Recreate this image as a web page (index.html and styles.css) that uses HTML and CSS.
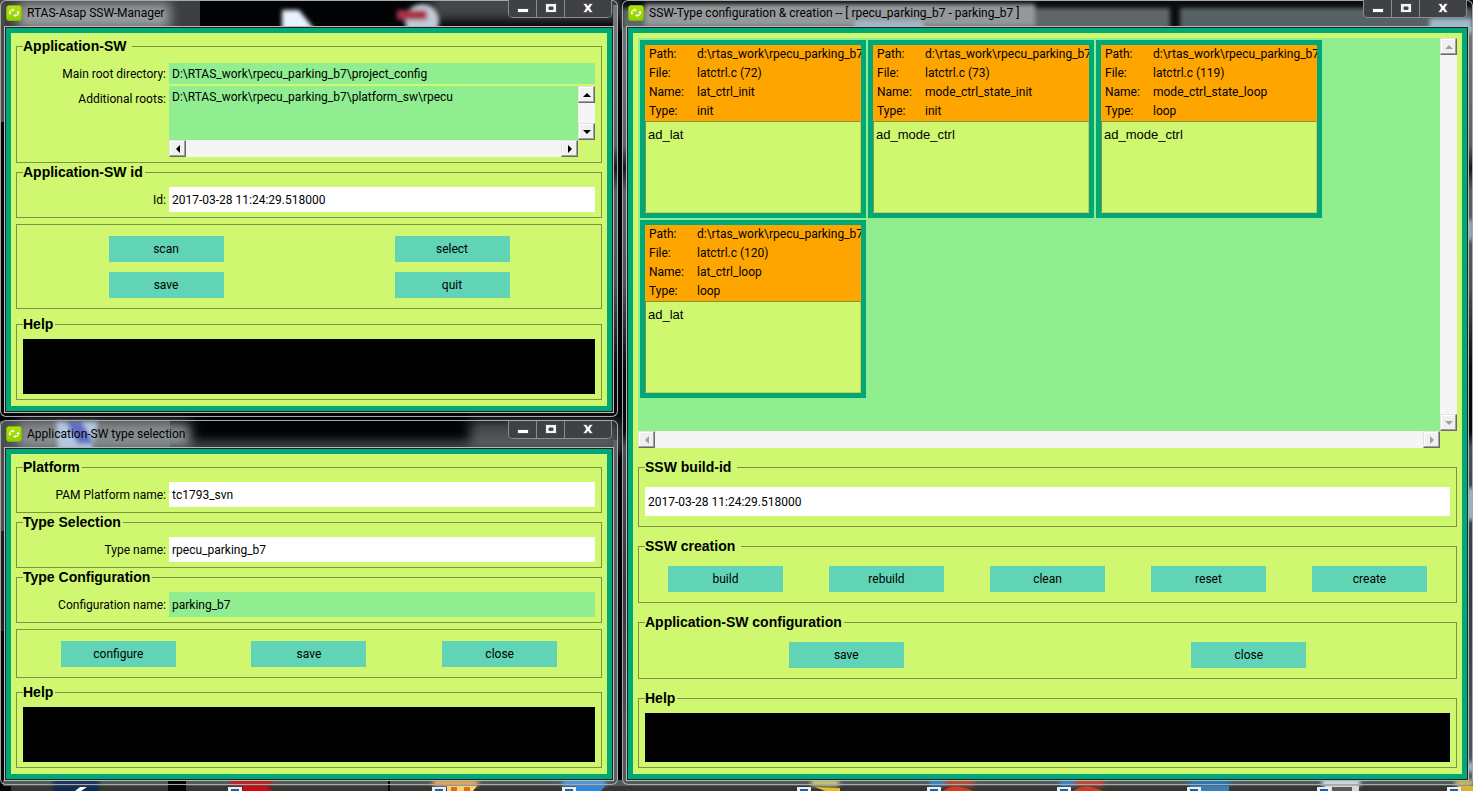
FILE: index.html
```
<!DOCTYPE html>
<html lang="en">
<head>
<meta charset="utf-8">
<title>RTAS-Asap SSW-Manager</title>
<link rel="stylesheet" href="styles.css">
</head>
<body>
<svg class="symbols" aria-hidden="true">
  <defs>
    <linearGradient id="lime" x1="0" y1="0" x2="0" y2="1"><stop offset="0" stop-color="#b4e010"/><stop offset="1" stop-color="#8fcf00"/></linearGradient>
    <symbol id="app" viewBox="0 0 16 16">
      <rect x=".5" y=".5" width="15" height="15" rx="2.5" fill="url(#lime)" stroke="#7fb800"/>
      <path d="M7 5H6a3 3 0 0 0-2.200 4.200M9 10.500h1a3 3 0 0 0 2.200-4.200" fill="none" stroke="#fff" stroke-width="1.200"/>
      <path d="M6.500 3.200 8.800 5 6.500 6.800zM9.500 8.700 7.200 10.500l2.300 1.800z" fill="#fff"/>
      <path d="M2.500 7.500h3.200L4.100 9.500zM13.500 8h-3.200l1.600-2z" fill="#fff"/>
    </symbol>
    <symbol id="min" viewBox="0 0 14 12"><rect x="1.500" y="6.500" width="11" height="4" fill="#fff" stroke="#4b4e5c"/></symbol>
    <symbol id="max" viewBox="0 0 14 12"><path d="M1.500 1.500h11v9h-11zM5 5v2.500h4V5z" fill="#f4f4f4" stroke="#4b4e5c" fill-rule="evenodd"/></symbol>
    <symbol id="close" viewBox="0 0 14 12"><path d="M2 1.500h3.300L7 3.800l1.700-2.300H12L9 6l3 4.500H8.700L7 8.200l-1.700 2.300H2L5 6z" fill="#fff" stroke="#4b4e5c" stroke-width=".8"/></symbol>
    <symbol id="tri" viewBox="0 0 8 8"><path d="M0 6 4 2l4 4z" fill="currentColor"/></symbol>
    <symbol id="shortcut" viewBox="0 0 14 5"><path d="M0 5V0h14v5z" fill="#e8eef4"/><path d="M3 5V2h8v3z" fill="#1d5fae"/></symbol>
  </defs>
</svg>

<svg class="wallpaper" viewBox="0 0 1473 791" preserveAspectRatio="none" aria-hidden="true">
  <defs>
    <filter id="b3" x="-50%" y="-50%" width="200%" height="200%"><feGaussianBlur stdDeviation="2"/></filter>
    <filter id="b8" x="-50%" y="-100%" width="200%" height="300%"><feGaussianBlur stdDeviation="6"/></filter>
    <linearGradient id="side" x1="0" y1="0" x2="0" y2="1">
      <stop offset="0" stop-color="#75797d"/><stop offset=".18" stop-color="#5b6265"/><stop offset=".21" stop-color="#15171a"/><stop offset=".24" stop-color="#566063"/><stop offset=".36" stop-color="#4b5356"/><stop offset=".47" stop-color="#08090b"/><stop offset=".55" stop-color="#07080a"/><stop offset=".57" stop-color="#46505a"/><stop offset=".75" stop-color="#303842"/><stop offset="1" stop-color="#515c5f"/>
    </linearGradient>
  </defs>
  <rect width="1473" height="791" fill="#020304"/>
  <path d="M0 0h200v27H0z" fill="#3c3e40"/><path d="M0 0h5v122H0z" fill="#48494b"/>
  <path d="M0 421h5v110H0z" fill="#4a4b4c"/><path d="M0 531h5v100H0z" fill="#1b1c1e"/>
  <path d="M0 421h170v27H0z" fill="#4c4f51"/>
  <g filter="url(#b8)">
    <rect x="18" y="3" width="152" height="26" fill="#999c9f"/>
    <rect x="18" y="423" width="172" height="26" fill="#888e90"/>
    <rect x="430" y="-8" width="190" height="28" fill="#45474b"/>
    <rect x="470" y="421" width="150" height="24" fill="#4c4e52"/>
    <rect x="190" y="443" width="430" height="8" fill="#6a7072"/>
  </g>
  <g filter="url(#b3)">
    <path d="M282 10h17l16 20h-33z" fill="#e9f3ff"/>
    <circle cx="422" cy="21" r="17" fill="#c2cbd6"/><path d="M397 10h30v10h-30z" fill="#a8324a"/>
    <path d="M56 422h42l-6 28H58z" fill="#b4c6e0"/><path d="M66 422h16l12 22H78z" fill="#626fc4"/>
  </g>
  <path d="M613 5h5v412h-5zM622 5h6v776h-6zM1467 5h6v776h-6z" fill="url(#side)"/>
  <path d="M613 440h5v341h-5z" fill="#5b6265"/>
  <path d="M622 0h851v27H622z" fill="#0a0c0e"/>
  <g filter="url(#b3)">
    <path d="M622 8h548v22H622z" fill="#5f6669"/><path d="M1180 8h293v22h-293z" fill="#596266"/>
    <path d="M645 4h390v22H645z" fill="#94989b"/><path d="M855 21h68v8h-68z" fill="#a3b8c9"/>
    <path d="M1430 19h43v14h-43zM1467 220h6v20h-6zM1467 488h8v32h-8zM1467 762h8v10h-8z" fill="#9dbccb"/>
  </g>
  <path d="M3 780h1470v6H3z" fill="#505b5e"/>
  <path d="M0 786h1473v5H0z" fill="#36362f"/><path d="M0 786h11v5H0zM168 781h18v10h-18zM388 781h2v10h-2z" fill="#050505"/>
  <g filter="url(#b3)">
    <path d="M53 780h46v6H53z" fill="#0b2c58"/><path d="M230 780h42v6h-42z" fill="#d01515"/><path d="M433 780h45v6h-45z" fill="#ffb060"/><path d="M562 780h44v6h-44z" fill="#55a4f0"/>
    <path d="M811 780h28v6h-28z" fill="#ddd67c"/><path d="M930 780h14v6h-14zM1060 780h14v6h-14z" fill="#368fd8"/><path d="M946 780h28v6h-28zM1076 780h28v6h-28z" fill="#d1482c"/><path d="M1190 780h40v6h-40z" fill="#207fc4"/><path d="M1322 780h38v6h-38z" fill="#e6f2ff"/><path d="M1455 780h18v6h-18z" fill="#dfc45c"/>
  </g>
  <path d="M53 787h46v4H53z" fill="#0b2c58"/><path d="M80 787h7l-6 4h-6z" fill="#fff"/>
  <path d="M243 786h22l8 5h-30z" fill="#c70d12"/>
  <path d="M447 786h30l-4 5h-26z" fill="#f6d27a"/><path d="M451 787h6v4h-6zM464 787h6v4h-6z" fill="#e36d0b"/>
  <path d="M576 786h29l-4 5h-25z" fill="#2f86dc"/><path d="m815 787 25 1v3h-15z" fill="#e5bd2c"/>
  <path d="M943 791q12-9 30 0zM1073 791q12-9 30 0z" fill="#cf3d22"/>
  <path d="M1190 786h39v5h-39z" fill="#3c7fb6"/><path d="M1325 786h34v5h-34z" fill="#d9d9d9"/><path d="M1332 787h20v4h-20z" fill="#5a5a5a"/><path d="M1458 786h15v5h-15z" fill="#d9b13b"/>
  <use href="#shortcut" x="228" y="787" width="14" height="5"/><use href="#shortcut" x="432" y="787" width="14" height="5"/><use href="#shortcut" x="562" y="787" width="14" height="5"/><use href="#shortcut" x="797" y="787" width="14" height="5"/><use href="#shortcut" x="927" y="787" width="14" height="5"/><use href="#shortcut" x="1057" y="787" width="14" height="5"/><use href="#shortcut" x="1187" y="787" width="14" height="5"/><use href="#shortcut" x="1317" y="787" width="14" height="5"/><use href="#shortcut" x="1447" y="787" width="14" height="5"/>
</svg>

<main class="desktop">
  <div class="stack">
    <section class="window">
      <header class="titlebar">
        <svg class="app-icon"><use href="#app"/></svg>
        <h1 class="title">RTAS-Asap SSW-Manager</h1>
        <div class="caption">
          <button class="cap" aria-label="Minimize"><svg><use href="#min"/></svg></button>
          <button class="cap" aria-label="Maximize"><svg><use href="#max"/></svg></button>
          <button class="cap cap-close" aria-label="Close"><svg><use href="#close"/></svg></button>
        </div>
      </header>
      <form class="client">
        <fieldset class="group group-roots">
          <legend class="wide">Application-SW</legend>
          <div class="fields">
            <label for="root">Main root directory:</label>
            <input class="field green short" id="root" readonly value="D:\RTAS_work\rpecu_parking_b7\project_config">
            <label class="top" for="roots">Additional roots:</label>
            <div class="scroller">
              <textarea class="area green" id="roots" readonly wrap="off">D:\RTAS_work\rpecu_parking_b7\platform_sw\rpecu</textarea>
              <div class="track vertical">
                <button type="button" class="arrow" aria-label="Scroll up"><svg><use href="#tri"/></svg></button>
                <button type="button" class="arrow down" aria-label="Scroll down"><svg><use href="#tri"/></svg></button>
              </div>
              <div class="track">
                <button type="button" class="arrow left" aria-label="Scroll left"><svg><use href="#tri"/></svg></button>
                <button type="button" class="arrow right" aria-label="Scroll right"><svg><use href="#tri"/></svg></button>
              </div>
            </div>
          </div>
        </fieldset>
        <fieldset class="group">
          <legend>Application-SW id</legend>
          <div class="fields">
            <label for="id">Id:</label>
            <input class="field" id="id" value="2017-03-28 11:24:29.518000">
          </div>
        </fieldset>
        <div class="group plain buttons two">
          <button type="button" class="btn">scan</button>
          <button type="button" class="btn">select</button>
          <button type="button" class="btn">save</button>
          <button type="button" class="btn">quit</button>
        </div>
        <fieldset class="group help">
          <legend>Help</legend>
          <div class="console"></div>
        </fieldset>
      </form>
    </section>

    <section class="window lower">
      <header class="titlebar">
        <svg class="app-icon"><use href="#app"/></svg>
        <h1 class="title">Application-SW type selection</h1>
        <div class="caption">
          <button class="cap" aria-label="Minimize"><svg><use href="#min"/></svg></button>
          <button class="cap" aria-label="Maximize"><svg><use href="#max"/></svg></button>
          <button class="cap cap-close" aria-label="Close"><svg><use href="#close"/></svg></button>
        </div>
      </header>
      <form class="client">
        <fieldset class="group">
          <legend>Platform</legend>
          <div class="fields">
            <label for="platform">PAM Platform name:</label>
            <input class="field" id="platform" value="tc1793_svn">
          </div>
        </fieldset>
        <fieldset class="group">
          <legend>Type Selection</legend>
          <div class="fields">
            <label for="type">Type name:</label>
            <input class="field" id="type" value="rpecu_parking_b7">
          </div>
        </fieldset>
        <fieldset class="group">
          <legend>Type Configuration</legend>
          <div class="fields">
            <label for="config">Configuration name:</label>
            <input class="field green" id="config" readonly value="parking_b7">
          </div>
        </fieldset>
        <div class="group plain buttons three">
          <button type="button" class="btn">configure</button>
          <button type="button" class="btn">save</button>
          <button type="button" class="btn">close</button>
        </div>
        <fieldset class="group help">
          <legend>Help</legend>
          <div class="console"></div>
        </fieldset>
      </form>
    </section>
  </div>

  <section class="window">
    <header class="titlebar">
      <svg class="app-icon"><use href="#app"/></svg>
      <h1 class="title">SSW-Type configuration &amp; creation -- [ rpecu_parking_b7 - parking_b7 ]</h1>
      <div class="caption">
        <button class="cap" aria-label="Minimize"><svg><use href="#min"/></svg></button>
        <button class="cap" aria-label="Maximize"><svg><use href="#max"/></svg></button>
        <button class="cap cap-close" aria-label="Close"><svg><use href="#close"/></svg></button>
      </div>
    </header>
    <form class="client roomy">
      <div class="scroller">
        <div class="cards">
          <article class="card">
            <dl><dt>Path:</dt><dd>d:\rtas_work\rpecu_parking_b7\</dd><dt>File:</dt><dd>latctrl.c (72)</dd><dt>Name:</dt><dd>lat_ctrl_init</dd><dt>Type:</dt><dd>init</dd></dl>
            <p>ad_lat</p>
          </article>
          <article class="card">
            <dl><dt>Path:</dt><dd>d:\rtas_work\rpecu_parking_b7\</dd><dt>File:</dt><dd>latctrl.c (73)</dd><dt>Name:</dt><dd>mode_ctrl_state_init</dd><dt>Type:</dt><dd>init</dd></dl>
            <p>ad_mode_ctrl</p>
          </article>
          <article class="card">
            <dl><dt>Path:</dt><dd>d:\rtas_work\rpecu_parking_b7\</dd><dt>File:</dt><dd>latctrl.c (119)</dd><dt>Name:</dt><dd>mode_ctrl_state_loop</dd><dt>Type:</dt><dd>loop</dd></dl>
            <p>ad_mode_ctrl</p>
          </article>
          <article class="card">
            <dl><dt>Path:</dt><dd>d:\rtas_work\rpecu_parking_b7\</dd><dt>File:</dt><dd>latctrl.c (120)</dd><dt>Name:</dt><dd>lat_ctrl_loop</dd><dt>Type:</dt><dd>loop</dd></dl>
            <p>ad_lat</p>
          </article>
        </div>
        <div class="track vertical">
          <button type="button" class="arrow" disabled aria-label="Scroll up"><svg><use href="#tri"/></svg></button>
          <button type="button" class="arrow down" disabled aria-label="Scroll down"><svg><use href="#tri"/></svg></button>
        </div>
        <div class="track">
          <button type="button" class="arrow left" disabled aria-label="Scroll left"><svg><use href="#tri"/></svg></button>
          <button type="button" class="arrow right" disabled aria-label="Scroll right"><svg><use href="#tri"/></svg></button>
        </div>
      </div>
      <fieldset class="group">
        <legend class="wide">SSW build-id</legend>
        <input class="field tall" aria-label="SSW build-id" value="2017-03-28 11:24:29.518000">
      </fieldset>
      <fieldset class="group">
        <legend class="wide">SSW creation</legend>
        <div class="buttons five">
          <button type="button" class="btn">build</button>
          <button type="button" class="btn">rebuild</button>
          <button type="button" class="btn">clean</button>
          <button type="button" class="btn">reset</button>
          <button type="button" class="btn">create</button>
        </div>
      </fieldset>
      <fieldset class="group">
        <legend>Application-SW configuration</legend>
        <div class="buttons two">
          <button type="button" class="btn">save</button>
          <button type="button" class="btn">close</button>
        </div>
      </fieldset>
      <fieldset class="group help">
        <legend>Help</legend>
        <div class="console"></div>
      </fieldset>
    </form>
  </section>
</main>
</body>
</html>
```
FILE: styles.css
```
:root {
  --lime: #cff870;
  --green: #90ee90;
  --teal: #00a878;
  --aqua: #60d4b4;
  --ui: Roboto, "Open Sans", sans-serif;
  --heading: "Liberation Sans", Arial, sans-serif;
}
* { box-sizing: border-box; }
body {
  margin: 0;
  background: #000;
  color: #000;
  font: 12px/18px var(--ui);
}
button, input, textarea { font: inherit; color: inherit; }
.symbols { position: absolute; width: 0; height: 0; }
.wallpaper { position: absolute; inset: 0; width: 100%; height: 100%; }

.desktop {
  position: relative;
  display: grid;
  grid-template-columns: 618fr 851fr;
  gap: 4px;
  min-height: 100vh;
  padding-bottom: 6px;
}
.stack {
  display: grid;
  grid-template-rows: auto 1fr;
  gap: 3px;
  min-width: 0;
}
.window {
  display: flex;
  flex-direction: column;
  min-width: 0;
  padding: 0 6px 6px;
  border-radius: 6px;
  box-shadow: inset 0 0 0 1px #a5abad;
}
.window.lower { padding-top: 1px; }
.titlebar {
  display: flex;
  align-items: center;
  height: 28px;
  padding-bottom: 2px;
}
.app-icon { width: 16px; height: 16px; flex: none; }
.title {
  flex: 1;
  margin: 0;
  padding-left: 5px;
  font: 12px/18px var(--ui);
  white-space: nowrap;
  overflow: hidden;
}
.caption {
  display: flex;
  align-self: flex-start;
  height: 18px;
  border: 1px solid #8b8e91;
  border-top: 0;
  border-radius: 0 0 5px 5px;
  overflow: hidden;
}
.cap {
  display: grid;
  place-items: center;
  width: 28px;
  padding: 0 0 2px;
  border: 0;
  border-right: 1px solid #8b8e91;
  background: #3f4145;
}
.cap svg { width: 14px; height: 12px; }
.cap-close { width: 46px; border-right: 0; }

.client {
  flex: 1;
  display: flex;
  flex-direction: column;
  gap: 1px;
  padding: 5px 5px 6px;
  border: 5px solid var(--teal);
  background: var(--lime);
  box-shadow: 0 0 0 1px #222, 0 0 0 2px #b5babb;
}
.roomy { gap: 11px; }
.group {
  min-width: 0;
  margin: 0;
  padding: 6px 6px 5px;
  border: 1px solid #7c9443;
}
.group-roots { padding-top: 8px; }
.plain { margin: 5px 0 6px; padding: 11px 6px 10px; }
.lower .plain { margin-bottom: 5px; }
.roomy .group { padding: 11px 6px 10px; }
.window .help { padding: 6px 6px 5px; }
.console { min-height: 55px; background: #000; }
.roomy .console { min-height: 49px; }
legend {
  padding: 0 2px 0 0;
  font: bold 14px/17px var(--heading);
}
legend.wide { padding-right: 6px; }

.fields {
  display: grid;
  grid-template-columns: 143px 1fr;
  gap: 2px 3px;
  align-items: center;
}
.fields label { text-align: right; white-space: nowrap; }
.fields .top { align-self: start; padding-top: 4px; }
.field {
  display: block;
  width: 100%;
  min-width: 0;
  height: 25px;
  padding: 0 3px;
  border: 0;
  background: #fff;
}
.field.short { height: 21px; }
.field.tall { height: 29px; }
.field.green, .area.green { background: var(--green); }

.scroller {
  display: grid;
  grid-template-columns: minmax(0, 1fr) 17px;
  grid-template-rows: 1fr 17px;
  min-width: 0;
}
.area {
  height: 54px;
  padding: 2px 3px;
  border: 0;
  resize: none;
  overflow: hidden;
}
.track {
  display: flex;
  justify-content: space-between;
  background: #f5f5f5;
}
.track.vertical { flex-direction: column; }
.arrow {
  display: grid;
  place-items: center;
  width: 17px;
  height: 17px;
  padding: 0;
  border: 1px solid;
  border-color: #e3e3e3 #696969 #696969 #e3e3e3;
  background: #f0f0f0;
  box-shadow: inset -1px -1px #a0a0a0, inset 1px 1px #fff;
}
.arrow svg { width: 8px; height: 8px; }
.arrow:disabled { color: #a0a0a0; }
.down svg { transform: rotate(180deg); }
.left svg { transform: rotate(-90deg); }
.right svg { transform: rotate(90deg); }

.buttons {
  display: grid;
  row-gap: 10px;
  justify-items: center;
}
.two { grid-template-columns: repeat(2, 1fr); }
.three { grid-template-columns: repeat(3, 1fr); }
.five { grid-template-columns: repeat(5, 1fr); }
.btn {
  width: 115px;
  height: 26px;
  padding: 0;
  border: 0;
  background: var(--aqua);
}

.roomy .scroller { flex: 1; }
.cards {
  display: flex;
  flex-wrap: wrap;
  align-content: flex-start;
  gap: 2px;
  padding: 2px;
  background: var(--green);
}
.card {
  display: flex;
  flex-direction: column;
  width: 226px;
  height: 178px;
  border: 5px solid var(--teal);
}
.card dl {
  display: grid;
  grid-template-columns: 48px minmax(0, 1fr);
  margin: 0;
  padding-left: 4px;
  background: #ffa500;
  line-height: 19px;
}
.card dd { margin: 0; white-space: nowrap; overflow: hidden; }
.card p {
  flex: 1;
  margin: 0;
  padding: 4px 2px;
  border: 1px solid;
  border-color: #7c9443 #d8c850 #d8c850 #7c9443;
  background: var(--lime);
  font: 13px/18px var(--heading);
}
```
